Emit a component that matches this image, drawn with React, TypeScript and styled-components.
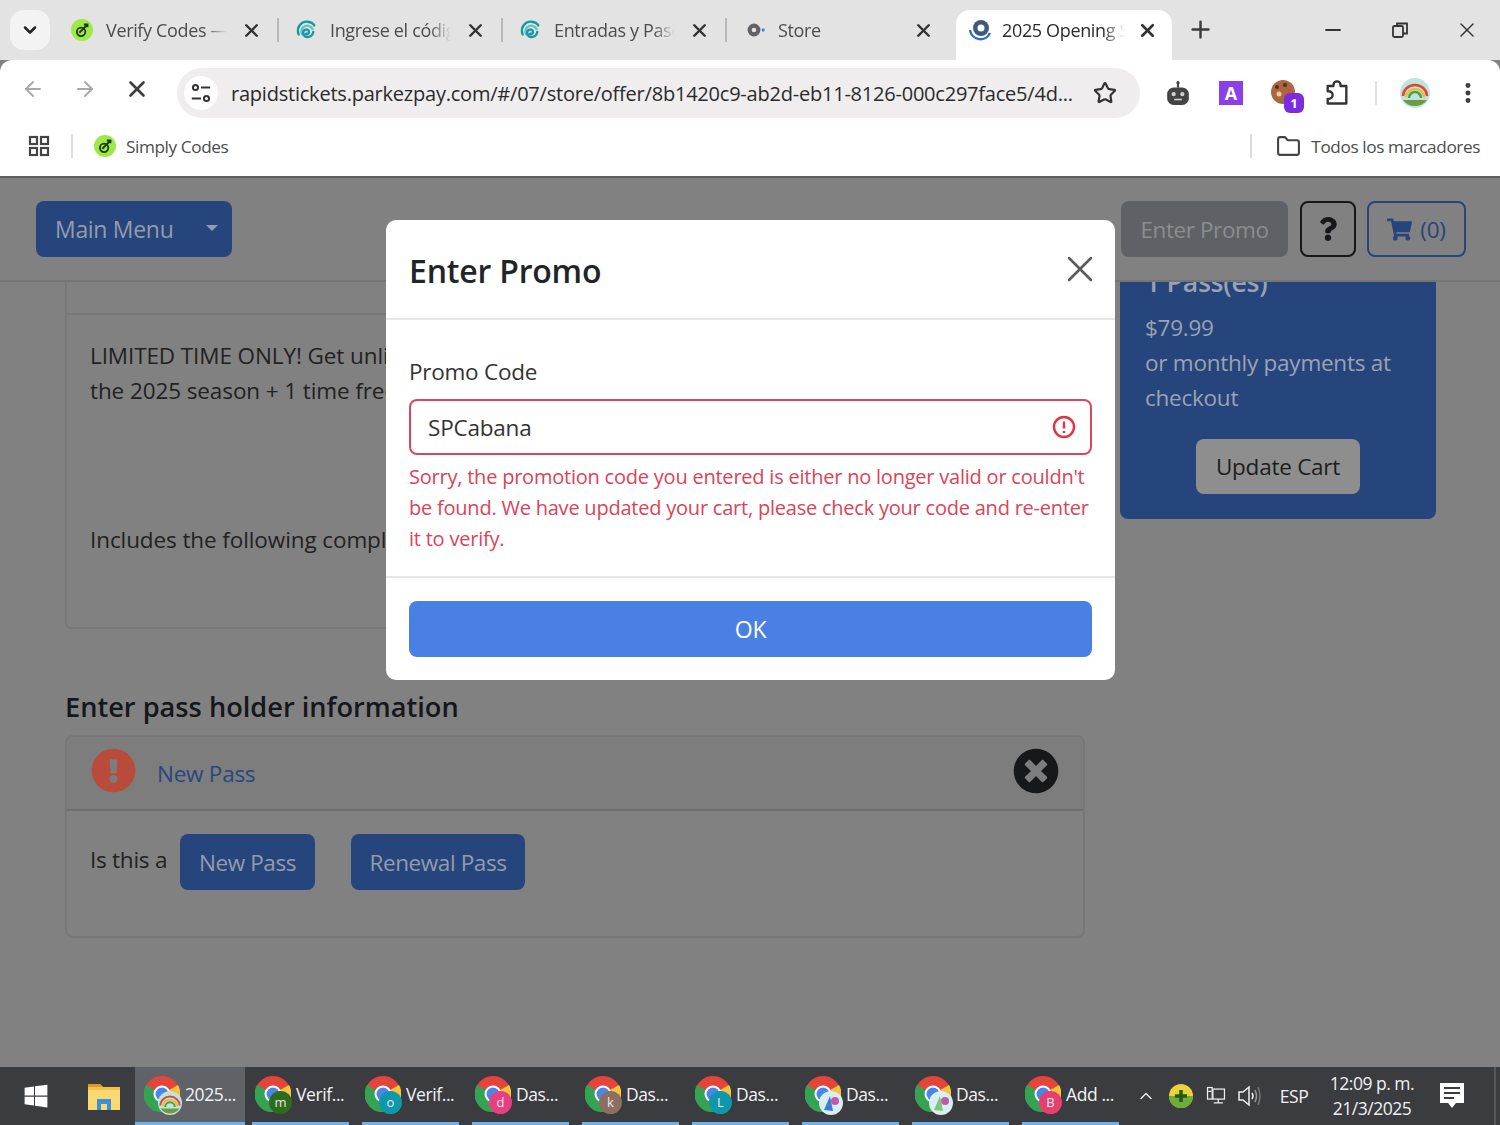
import React from 'react';
import styled, { createGlobalStyle } from 'styled-components';
import { ArrowLeft, ArrowRight, ChevronDown, ChevronUp, Folder, Minus, MoreVertical, Plus, Star, X } from 'lucide-react';
import { FaExclamationCircle, FaQuestion, FaShoppingCart, FaTimesCircle, FaWindows } from 'react-icons/fa';

const GlobalStyle = createGlobalStyle`
  html, body { margin: 0; padding: 0; }
  body { font-family: "Open Sans", "Noto Sans", sans-serif; overflow: hidden; }
  * { box-sizing: border-box; }
`;

const Screen = styled.div`
  display: flex;
  flex-direction: column;
  width: 1500px;
  height: 1125px;
  overflow: hidden;
  background: #818181;
`;

/* browser chrome */
const TabStrip = styled.div`
  display: flex;
  align-items: flex-end;
  height: 60px;
  padding-left: 10px;
  background: #e3e3e3;
`;

const TabListButton = styled.div`
  display: flex;
  align-items: center;
  justify-content: center;
  width: 40px;
  height: 40px;
  margin: 0 5px 10px 0;
  border-radius: 14px;
  background: #f3f3f3;
  color: #222;
`;

const Tab = styled.div<{ $active?: boolean }>`
  position: relative;
  display: flex;
  align-items: center;
  width: ${({ $active }) => ($active ? '216px' : '224px')};
  height: 50px;
  margin-left: ${({ $active }) => ($active ? '5px' : '0')};
  padding: 0 0 10px ${({ $active }) => ($active ? '12px' : '16px')};
  color: ${({ $active }) => ($active ? '#2a2a2a' : '#4c4c4c')};
  background: ${({ $active }) => ($active ? '#fff' : 'transparent')};
  border-radius: 14px 14px 0 0;
`;

const TabDivider = styled.span`
  position: absolute;
  right: 0;
  top: 8px;
  width: 2px;
  height: 24px;
  background: #b9b9b9;
`;

const TabTitle = styled.span<{ $active?: boolean }>`
  flex: 1;
  min-width: 0;
  margin-left: ${({ $active }) => ($active ? '10px' : '13px')};
  font-size: 18px;
  letter-spacing: -0.35px;
  white-space: nowrap;
  overflow: hidden;
  mask-image: linear-gradient(to right, #000 82%, transparent 100%);
`;

const TabClose = styled.span<{ $active?: boolean }>`
  display: flex;
  flex: none;
  width: 24px;
  margin: ${({ $active }) => ($active ? '0 13px 0 10px' : '0 16px 0 12px')};
  justify-content: center;
  color: #333;
`;

const NewTab = styled.div`
  display: flex;
  margin: 0 0 17px 15px;
  color: #3c3c3c;
`;

const WindowButtons = styled.div`
  display: flex;
  align-items: center;
  gap: 43px;
  margin: 0 21px 18px auto;
  color: #333;
`;

const WindowButton = styled.span`
  display: flex;
  width: 24px;
  height: 24px;
  align-items: center;
  justify-content: center;
`;

const Toolbar = styled.div`
  display: flex;
  align-items: center;
  height: 58px;
  padding-left: 20px;
  background: #fff;
  border-radius: 12px 12px 0 0;
`;

const NavIcon = styled.span<{ $muted?: boolean }>`
  display: flex;
  width: 26px;
  margin-right: 26px;
  justify-content: center;
  color: ${({ $muted }) => ($muted ? '#a9a9a9' : '#3e3e3e')};
`;

const Omnibox = styled.div`
  display: flex;
  align-items: center;
  width: 963px;
  height: 50px;
  margin: 8px 0 0 1px;
  padding: 0 23px 0 7px;
  border-radius: 25px;
  background: #efedee;
`;

const SiteInfo = styled.span`
  display: flex;
  flex: none;
  align-items: center;
  justify-content: center;
  width: 34px;
  height: 34px;
  border-radius: 50%;
  background: #fff;
`;

const UrlText = styled.span`
  flex: 1;
  margin-left: 13px;
  font-size: 20px;
  letter-spacing: -0.22px;
  color: #2b2b2b;
  white-space: nowrap;
`;

const ExtensionRow = styled.div`
  display: flex;
  align-items: center;
  margin-top: 8px;
  color: #3b3b3b;
`;

const ExtSlot = styled.span<{ $w: number }>`
  position: relative;
  display: flex;
  justify-content: center;
  width: ${({ $w }) => $w}px;
`;

const LetterIcon = styled.span`
  width: 24px;
  height: 24px;
  background: #8b3fe8;
  color: #fff;
  font-size: 18px;
  font-weight: 700;
  line-height: 24px;
  text-align: center;
`;

const CountBadge = styled.span`
  position: absolute;
  right: 18px;
  bottom: -6px;
  width: 20px;
  height: 20px;
  border-radius: 6px;
  background: #7d2be0;
  color: #fff;
  font-size: 13px;
  font-weight: 700;
  line-height: 20px;
  text-align: center;
`;

const ToolbarDivider = styled.span`
  width: 2px;
  height: 24px;
  margin: 0 12px 0 23px;
  background: #e2e2e2;
`;

const BookmarksBar = styled.div`
  display: flex;
  align-items: center;
  height: 60px;
  padding: 0 20px 2px 28px;
  background: #fff;
  border-bottom: 2px solid #5f5f5f;
  color: #4c4c4c;
  font-size: 17.2px;
  letter-spacing: -0.4px;
`;

const BarDivider = styled.span<{ $gap: number }>`
  width: 2px;
  height: 24px;
  margin: 0 ${({ $gap }) => $gap}px;
  background: #dcdcdc;
`;

const BookmarkLabel = styled.span`
  margin-left: 10px;
`;

const Spacer = styled.span`
  flex: 1;
`;

/* page behind the modal, colours as dimmed by the backdrop */
const Page = styled.main`
  position: relative;
  flex: 1;
  min-height: 0;
  overflow: hidden;
  background: #818181;
  color: #222;
  font-size: 22.5px;
  letter-spacing: -0.25px;
`;

const NavBar = styled.div`
  display: flex;
  align-items: center;
  height: 104px;
  padding: 0 34px 0 36px;
  border-bottom: 2px solid #757575;
`;

const SolidButton = styled.div<{ $w: number }>`
  display: flex;
  align-items: center;
  justify-content: center;
  flex: none;
  width: ${({ $w }) => $w}px;
  height: 56px;
  border-radius: 8px;
  background: #27457d;
  color: #939cab;
  font-size: 22.5px;
  letter-spacing: -0.4px;
`;

const MenuButton = styled(SolidButton)`
  justify-content: flex-start;
  padding-left: 19px;
  font-size: 23px;
  letter-spacing: -0.3px;
`;

const Caret = styled.span`
  width: 0;
  height: 0;
  margin-left: 33px;
  margin-top: -2px;
  border-left: 6px solid transparent;
  border-right: 6px solid transparent;
  border-top: 6px solid #939cab;
`;

const PromoButton = styled(SolidButton)`
  margin-left: auto;
  background: #5e6165;
  color: #8b8e90;
`;

const RenewalButton = styled(SolidButton)`
  margin-left: 36px;
`;

const OutlineButton = styled.div<{ $w: number; $color: string; $gap: number }>`
  display: flex;
  align-items: center;
  justify-content: center;
  gap: 8px;
  width: ${({ $w }) => $w}px;
  height: 56px;
  margin-left: ${({ $gap }) => $gap}px;
  border: 2px solid ${({ $color }) => $color};
  border-radius: 8px;
  color: ${({ $color }) => $color};
`;

const Content = styled.div`
  display: grid;
  grid-template-columns: 1020px 316px;
  column-gap: 35px;
  padding-left: 65px;
  align-items: start;
`;

const OfferFrame = styled.div`
  height: 31px;
  border-left: 2px solid #777;
`;

const OfferBox = styled.div`
  height: 316px;
  padding: 23px 23px;
  border: 2px solid #777;
  border-right: 0;
  border-radius: 0 0 0 6px;
  line-height: 35px;
  letter-spacing: -0.1px;
  white-space: nowrap;
`;

const OfferParagraph = styled.p<{ $top?: number }>`
  margin: ${({ $top }) => $top ?? 0}px 0 0;
`;

const SectionTitle = styled.h2`
  margin: 58px 0 8px 0;
  color: #14171b;
  font-size: 27.2px;
  font-weight: 600;
  letter-spacing: 0;
  line-height: 40px;
`;

const PassCard = styled.div`
  height: 203px;
  border: 2px solid #777;
  border-radius: 8px;
`;

const PassHeader = styled.div`
  display: flex;
  align-items: center;
  height: 74px;
  padding: 0 24px;
  background: #7d7d7d;
  border-bottom: 2px solid #6e6e6e;
  border-radius: 6px 6px 0 0;
`;

const AlertIcon = styled(FaExclamationCircle)`
  margin-top: -6px;
  color: #b84b39;
`;

const PassLink = styled.span`
  margin-left: 21px;
  color: #28477f;
`;

const RemoveIcon = styled.span`
  display: flex;
  margin-left: auto;
  margin-top: -4px;
  color: #17181a;
`;

const PassBody = styled.div`
  display: flex;
  align-items: flex-start;
  padding: 23px 0 0 23px;
`;

const PassPrompt = styled.span`
  flex: none;
  width: 90px;
  margin-top: 10px;
`;

const SideCard = styled.aside`
  height: 237px;
  padding: 0 25px;
  background: #27457d;
  border-radius: 0 0 8px 8px;
  color: #9aa3b1;
  line-height: 35px;
  overflow: hidden;
`;

const SideTitle = styled.div`
  margin: -20px 0 8px;
  font-size: 26.6px;
  font-weight: 600;
  line-height: 40px;
`;

const UpdateButton = styled.div`
  display: flex;
  align-items: center;
  justify-content: center;
  width: 164px;
  height: 55px;
  margin: 24px 0 0 51px;
  border-radius: 8px;
  background: #8e8e8e;
  color: #1d1d1d;
`;

/* modal */
const Modal = styled.section`
  position: absolute;
  left: 386px;
  top: 42px;
  width: 729px;
  height: 460px;
  background: #fff;
  border-radius: 10px;
  color: #212529;
`;

const ModalHeader = styled.header`
  display: flex;
  align-items: center;
  justify-content: space-between;
  height: 100px;
  padding: 3px 13px 0 23px;
  border-bottom: 2px solid #e7e7e7;
`;

const ModalTitle = styled.h1`
  margin: 0;
  font-size: 32px;
  font-weight: 600;
  letter-spacing: -0.2px;
`;

const CloseIcon = styled.span`
  display: flex;
  margin-top: -3px;
  color: #5b5b5b;
`;

const ModalBody = styled.div`
  height: 258px;
  padding: 34px 23px 0;
  border-bottom: 2px solid #e7e7e7;
`;

const FieldLabel = styled.label`
  display: block;
  font-size: 22.5px;
  line-height: 36px;
  color: #333;
`;

const PromoField = styled.div`
  display: flex;
  align-items: center;
  justify-content: space-between;
  height: 56px;
  margin-top: 9px;
  padding: 0 14px 0 17px;
  border: 2px solid #d8485c;
  border-radius: 8px;
  font-size: 22.5px;
  letter-spacing: -0.2px;
  color: #333;
`;

const FieldError = styled.p`
  margin: 6px 0 0;
  color: #dc4357;
  font-size: 20px;
  line-height: 31px;
  letter-spacing: -0.22px;
`;

const ModalFooter = styled.footer`
  padding: 23px;
`;

const OkButton = styled.div`
  display: flex;
  align-items: center;
  justify-content: center;
  height: 56px;
  border-radius: 8px;
  background: #4a80e3;
  color: #fff;
  font-size: 23px;
`;

/* taskbar */
const Taskbar = styled.footer`
  display: flex;
  align-items: stretch;
  flex: none;
  height: 58px;
  background: #3a3c40;
  color: #f2f2f2;
  font-size: 17.5px;
  letter-spacing: -0.4px;
`;

const StartSlot = styled.div`
  display: flex;
  flex: none;
  align-items: center;
  justify-content: center;
  width: 71px;
  color: #fff;
`;

const ExplorerSlot = styled.div`
  display: flex;
  flex: none;
  align-items: center;
  width: 64px;
  padding-left: 17px;
`;

const TaskItem = styled.div<{ $active?: boolean }>`
  display: flex;
  flex: none;
  align-items: center;
  width: ${({ $active }) => ($active ? '110px' : '97px')};
  margin-right: ${({ $active }) => ($active ? '7px' : '13px')};
  padding: 0 0 2px ${({ $active }) => ($active ? '9px' : '3px')};
  background: ${({ $active }) => ($active ? '#5f6368' : 'transparent')};
  border-bottom: 3px solid #6fb1e6;
  white-space: nowrap;
`;

const TaskIcon = styled.span`
  position: relative;
  display: flex;
  flex: none;
  width: 38px;
  height: 36px;
  margin-right: 3px;
`;

const TaskBadge = styled.span<{ $bg: string }>`
  position: absolute;
  right: 1px;
  bottom: -2px;
  width: 23px;
  height: 23px;
  border-radius: 50%;
  background: ${({ $bg }) => $bg};
  color: #e8e8e8;
  font-size: 13px;
  letter-spacing: 0;
  line-height: 23px;
  text-align: center;
`;

const TaskAvatar = styled.span`
  position: absolute;
  right: 0;
  bottom: -3px;
  display: flex;
`;

const Tray = styled.div`
  display: flex;
  flex: none;
  align-items: center;
  margin-left: 4px;
  color: #f0f0f0;
`;

const TraySlot = styled.span<{ $w: number }>`
  display: flex;
  justify-content: center;
  width: ${({ $w }) => $w}px;
`;

const Clock = styled.div`
  width: 116px;
  letter-spacing: -0.5px;
  text-align: center;
  line-height: 25px;
`;

const TrayEdge = styled.span`
  width: 2px;
  align-self: stretch;
  margin-left: 20px;
  background: #55585c;
`;

const ChromeLogo = ({ size = 36 }: { size?: number }) => (
  <svg width={size} height={size} viewBox="0 0 36 36">
    <circle cx="18" cy="18" r="18" fill="#e3453a" />
    <path d="M18 18 L34 9 A18 18 0 0 1 19 36 Z" fill="#f5c33b" />
    <path d="M18 18 L19 36 A18 18 0 0 1 2 9 Z" fill="#34a353" />
    <circle cx="18" cy="18" r="8.5" fill="#fff" />
    <circle cx="18" cy="18" r="6.5" fill="#4a86e8" />
  </svg>
);

const SimplyIcon = ({ size = 22 }: { size?: number }) => (
  <svg width={size} height={size} viewBox="0 0 24 24">
    <circle cx="12" cy="12" r="12" fill="#9fe84a" />
    <circle cx="11" cy="14" r="4.6" fill="none" stroke="#1f3a1a" strokeWidth="2" />
    <path d="M9 15 L18 6 M14 6 h4 v3" fill="none" stroke="#1f3a1a" strokeWidth="2" />
  </svg>
);

const SwirlIcon = () => (
  <svg width="22" height="22" viewBox="0 0 24 24" fill="none" stroke="#1c97a3" strokeWidth="2.6" strokeLinecap="round">
    <path d="M4 17 C1 9 7 2 14 3 C18 3.600 20 5 21 7" />
    <path d="M8 17 C5 11 10 6 15 7.500 C17 8 18 9 19 11" stroke="#5cc6c0" />
    <path d="M20 14 C19 20 11 22 9 16 C8 12 13 10 15 13 C16 15 14 17 12 16" />
  </svg>
);

const StoreIcon = () => (
  <svg width="22" height="22" viewBox="0 0 24 24">
    <circle cx="12" cy="12" r="7" fill="#5f6368" />
    <circle cx="12" cy="12" r="2.500" fill="#e3e3e3" />
    <circle cx="22" cy="12" r="1.800" fill="#4a80e3" />
  </svg>
);

const SpinnerIcon = () => (
  <svg width="24" height="24" viewBox="0 0 24 24" fill="none">
    <path d="M2 12 A10.500 10.500 0 0 0 22 15" stroke="#2d6fd0" strokeWidth="2.400" />
    <circle cx="13" cy="10" r="8" fill="#40597c" />
    <circle cx="13" cy="10" r="3.500" fill="#fff" />
  </svg>
);

const TuneIcon = () => (
  <svg width="22" height="22" viewBox="0 0 24 24" fill="none" stroke="#333" strokeWidth="2.200">
    <circle cx="6" cy="6" r="2.800" />
    <path d="M12 6 H22 M2 18 H12" />
    <circle cx="18" cy="18" r="2.800" />
  </svg>
);

const RestoreIcon = () => (
  <svg width="18" height="18" viewBox="0 0 18 18" fill="none" stroke="#333" strokeWidth="1.800">
    <rect x="2" y="5" width="10" height="11" rx="1.500" />
    <path d="M6 5 V2.500 H16 V12.500 H12" />
  </svg>
);

const GridIcon = () => (
  <svg width="22" height="22" viewBox="0 0 22 22" fill="none" stroke="#444" strokeWidth="2.200">
    <rect x="2" y="2" width="7" height="7" />
    <rect x="13" y="2" width="7" height="7" />
    <rect x="2" y="13" width="7" height="7" />
    <rect x="13" y="13" width="7" height="7" />
  </svg>
);

const RobotIcon = () => (
  <svg width="26" height="26" viewBox="0 0 24 24">
    <path d="M12 1.500 V7" stroke="#444" strokeWidth="2" />
    <circle cx="12" cy="2.500" r="1.500" fill="#444" />
    <rect x="2" y="7" width="20" height="16" rx="6" fill="#444" />
    <circle cx="8" cy="13" r="2" fill="#cfcfcf" />
    <circle cx="16" cy="13" r="2" fill="#cfcfcf" />
    <path d="M8.500 18 H15.500" stroke="#cfcfcf" strokeWidth="1.500" />
  </svg>
);

const PuzzleIcon = () => (
  <svg width="28" height="28" viewBox="0 0 24 24" fill="none" stroke="#333" strokeWidth="2" strokeLinejoin="round">
    <path d="M4 6 H9 V5 A3 3 0 0 1 15 5 V6 H20 V21 H4 V17 H5 A3 3 0 0 0 5 10.500 H4 Z" />
  </svg>
);

const CookieMonkey = () => (
  <svg width="28" height="28" viewBox="0 0 28 28">
    <circle cx="13" cy="13" r="12" fill="#a9683f" />
    <circle cx="7" cy="8" r="2" fill="#5a2f1a" />
    <circle cx="15" cy="6" r="2" fill="#5a2f1a" />
    <circle cx="19" cy="12" r="2" fill="#d44a3a" />
    <circle cx="9" cy="15" r="2.500" fill="#f0c89a" />
  </svg>
);

const RainbowAvatar = ({ size = 30 }: { size?: number }) => (
  <svg width={size} height={size} viewBox="0 0 30 30">
    <circle cx="15" cy="15" r="15" fill="#bfe4dc" />
    <path d="M3 18 A12 11 0 0 1 27 18" fill="none" stroke="#d9483b" strokeWidth="2.500" />
    <path d="M6 19 A9 8 0 0 1 24 19" fill="none" stroke="#eebb3d" strokeWidth="2.500" />
    <path d="M9 20 A6 6 0 0 1 21 20" fill="none" stroke="#4f9e4a" strokeWidth="2.500" />
    <path d="M3 22 H27 A15 15 0 0 1 3 22 Z" fill="#6e9a46" />
  </svg>
);

const PhotoAvatar = ({ tone }: { tone: string }) => (
  <svg width="24" height="24" viewBox="0 0 24 24">
    <circle cx="12" cy="12" r="12" fill="#d8eef0" />
    <path d="M5 19 L11 5 L14 20 Z" fill={tone} />
    <circle cx="16" cy="10" r="4" fill="#c05ab0" />
  </svg>
);

const ExplorerIcon = () => (
  <svg width="32" height="30" viewBox="0 0 32 30">
    <path d="M0 3 H12 L15 6 H32 V29 H0 Z" fill="#f0c24b" />
    <path d="M0 3 H12 L15 6 H0 Z" fill="#d99a2b" />
    <path d="M0 9 H32 V29 H0 Z" fill="#f9d971" />
    <rect x="9" y="18" width="14" height="11" fill="#3f8fd8" />
    <rect x="13" y="23" width="6" height="6" fill="#f9d971" />
  </svg>
);

const TrayPlusIcon = () => (
  <svg width="24" height="24" viewBox="0 0 24 24">
    <circle cx="12" cy="12" r="12" fill="#e9d338" />
    <path d="M0 12 A12 12 0 0 0 24 12 Z" fill="#6cae3c" />
    <path d="M12 6 V18 M6 12 H18" stroke="#245a1f" strokeWidth="3.500" />
  </svg>
);

const NetworkIcon = () => (
  <svg width="26" height="24" viewBox="0 0 26 24" fill="none" stroke="#f0f0f0" strokeWidth="1.600">
    <rect x="9" y="3" width="15" height="13" />
    <rect x="2" y="1" width="6" height="15" fill="#3a3c40" />
    <path d="M3 6 H7 M16 16 V21 M10 21 H22" />
  </svg>
);

const SpeakerIcon = () => (
  <svg width="26" height="24" viewBox="0 0 26 24" fill="none" stroke="#f0f0f0" strokeWidth="1.500">
    <path d="M2 8 H6 L12 3 V21 L6 16 H2 Z" />
    <path d="M15 9 Q17 12 15 15" />
    <path d="M18 6 Q21 12 18 18" stroke="#9a9a9a" />
    <path d="M21 3 Q25 12 21 21" stroke="#777" />
  </svg>
);

const NoteIcon = () => (
  <svg width="24" height="26" viewBox="0 0 24 26">
    <path d="M0 0 H24 V20 H16 L12 25 L8 20 H0 Z" fill="#fff" />
    <path d="M4 5 H20 M4 10 H20 M4 15 H14" stroke="#3a3c40" strokeWidth="2" />
  </svg>
);

const tabs = [
  { title: 'Verify Codes — Simply', icon: <SimplyIcon /> },
  { title: 'Ingrese el código', icon: <SwirlIcon /> },
  { title: 'Entradas y Pases', icon: <SwirlIcon /> },
  { title: 'Store', icon: <StoreIcon /> },
];

const taskItems = [
  { label: 'Verif...', letter: 'm', color: '#2f6b1e' },
  { label: 'Verif...', letter: 'o', color: '#0f97ad' },
  { label: 'Das...', letter: 'd', color: '#e83f84' },
  { label: 'Das...', letter: 'k', color: '#8d6e63' },
  { label: 'Das...', letter: 'L', color: '#0f97ad' },
  { label: 'Das...', avatar: '#3a7fd0' },
  { label: 'Das...', avatar: '#7bc67a' },
  { label: 'Add ...', letter: 'B', color: '#e83f6f' },
];

const App: React.FC = () => (
  <Screen>
    <GlobalStyle />
    <TabStrip>
      <TabListButton>
        <ChevronDown size={20} strokeWidth={3} />
      </TabListButton>
      {tabs.map(({ title, icon }, index) => (
        <Tab key={title}>
          {icon}
          <TabTitle>{title}</TabTitle>
          <TabClose>
            <X size={21} strokeWidth={2.8} />
          </TabClose>
          {index < 3 && <TabDivider />}
        </Tab>
      ))}
      <Tab $active>
        <SpinnerIcon />
        <TabTitle $active>2025 Opening Season</TabTitle>
        <TabClose $active>
          <X size={21} strokeWidth={3} />
        </TabClose>
      </Tab>
      <NewTab>
        <Plus size={27} strokeWidth={2.2} />
      </NewTab>
      <WindowButtons>
        <WindowButton><Minus size={24} strokeWidth={1.8} /></WindowButton>
        <WindowButton><RestoreIcon /></WindowButton>
        <WindowButton><X size={28} strokeWidth={1.4} /></WindowButton>
      </WindowButtons>
    </TabStrip>

    <Toolbar>
      <NavIcon $muted><ArrowLeft size={24} strokeWidth={2} /></NavIcon>
      <NavIcon $muted><ArrowRight size={24} strokeWidth={2} /></NavIcon>
      <NavIcon><X size={26} strokeWidth={2.4} /></NavIcon>
      <Omnibox>
        <SiteInfo><TuneIcon /></SiteInfo>
        <UrlText>rapidstickets.parkezpay.com/#/07/store/offer/8b1420c9-ab2d-eb11-8126-000c297face5/4d...</UrlText>
        <Star size={24} strokeWidth={2.2} color="#333" />
      </Omnibox>
      <ExtensionRow>
        <ExtSlot $w={76}><RobotIcon /></ExtSlot>
        <ExtSlot $w={30}><LetterIcon>A</LetterIcon></ExtSlot>
        <ExtSlot $w={76}>
          <CookieMonkey />
          <CountBadge>1</CountBadge>
        </ExtSlot>
        <ExtSlot $w={30}><PuzzleIcon /></ExtSlot>
        <ToolbarDivider />
        <ExtSlot $w={52}><RainbowAvatar /></ExtSlot>
        <ExtSlot $w={54}><MoreVertical size={26} strokeWidth={2.6} /></ExtSlot>
      </ExtensionRow>
    </Toolbar>

    <BookmarksBar>
      <GridIcon />
      <BarDivider $gap={21} />
      <SimplyIcon />
      <BookmarkLabel>Simply Codes</BookmarkLabel>
      <Spacer />
      <BarDivider $gap={24} />
      <Folder size={25} strokeWidth={2} color="#444" />
      <BookmarkLabel>Todos los marcadores</BookmarkLabel>
    </BookmarksBar>

    <Page>
      <NavBar>
        <MenuButton $w={196}>
          Main Menu
          <Caret />
        </MenuButton>
        <PromoButton $w={167}>Enter Promo</PromoButton>
        <OutlineButton $w={56} $gap={12} $color="#16171a">
          <FaQuestion size={24} />
        </OutlineButton>
        <OutlineButton $w={99} $gap={11} $color="#27457d">
          <FaShoppingCart size={25} />
          (0)
        </OutlineButton>
      </NavBar>
      <Content>
        <div>
          <OfferFrame />
          <OfferBox>
            <OfferParagraph>
              LIMITED TIME ONLY! Get unlimited
              <br />
              the 2025 season + 1 time free
            </OfferParagraph>
            <OfferParagraph $top={114}>Includes the following complimentary</OfferParagraph>
          </OfferBox>
          <SectionTitle>Enter pass holder information</SectionTitle>
          <PassCard>
            <PassHeader>
              <AlertIcon size={45} />
              <PassLink>New Pass</PassLink>
              <RemoveIcon>
                <FaTimesCircle size={46} />
              </RemoveIcon>
            </PassHeader>
            <PassBody>
              <PassPrompt>Is this a</PassPrompt>
              <SolidButton $w={135}>New Pass</SolidButton>
              <RenewalButton $w={174}>Renewal Pass</RenewalButton>
            </PassBody>
          </PassCard>
        </div>
        <SideCard>
          <SideTitle>1 Pass(es)</SideTitle>
          $79.99
          <br />
          or monthly payments at checkout
          <UpdateButton>Update Cart</UpdateButton>
        </SideCard>
      </Content>

      <Modal>
        <ModalHeader>
          <ModalTitle>Enter Promo</ModalTitle>
          <CloseIcon><X size={44} strokeWidth={1.4} /></CloseIcon>
        </ModalHeader>
        <ModalBody>
          <FieldLabel>Promo Code</FieldLabel>
          <PromoField>
            SPCabana
            <svg width="24" height="24" viewBox="0 0 24 24" fill="none" stroke="#dc3545" strokeWidth="2.400">
              <circle cx="12" cy="12" r="10" />
              <path d="M12 6.500 V13.500 M12 16 V18" />
            </svg>
          </PromoField>
          <FieldError>
            Sorry, the promotion code you entered is either no longer valid or couldn't be found. We have updated your cart, please check your code and re-enter it to verify.
          </FieldError>
        </ModalBody>
        <ModalFooter>
          <OkButton>OK</OkButton>
        </ModalFooter>
      </Modal>
    </Page>

    <Taskbar>
      <StartSlot><FaWindows size={26} /></StartSlot>
      <ExplorerSlot><ExplorerIcon /></ExplorerSlot>
      <TaskItem $active>
        <TaskIcon>
          <ChromeLogo />
          <TaskAvatar><RainbowAvatar size={24} /></TaskAvatar>
        </TaskIcon>
        2025...
      </TaskItem>
      {taskItems.map(({ label, letter, color, avatar }, index) => (
        <TaskItem key={index}>
          <TaskIcon>
            <ChromeLogo />
            {letter && color && <TaskBadge $bg={color}>{letter}</TaskBadge>}
            {avatar && <TaskAvatar><PhotoAvatar tone={avatar} /></TaskAvatar>}
          </TaskIcon>
          {label}
        </TaskItem>
      ))}
      <Tray>
        <TraySlot $w={20}><ChevronUp size={32} strokeWidth={1.6} /></TraySlot>
        <TraySlot $w={50}><TrayPlusIcon /></TraySlot>
        <TraySlot $w={20}><NetworkIcon /></TraySlot>
        <TraySlot $w={48}><SpeakerIcon /></TraySlot>
        <TraySlot $w={40}>ESP</TraySlot>
        <Clock>
          12:09 p. m.
          <br />
          21/3/2025
        </Clock>
        <TraySlot $w={44}><NoteIcon /></TraySlot>
        <TrayEdge />
      </Tray>
    </Taskbar>
  </Screen>
);

export default App;
